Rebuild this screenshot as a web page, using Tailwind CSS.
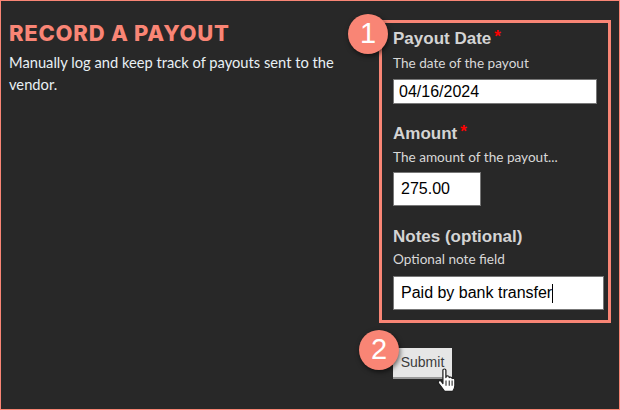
<!DOCTYPE html>
<html lang="en">
  <head>
    <meta charset="UTF-8" />
    <title>Record a payout</title>
    <script src="https://cdn.jsdelivr.net/npm/@tailwindcss/browser@4"></script>
  </head>
  <body class="bg-[#282828]">
    <div class="relative flex h-[410px] w-[620px] overflow-hidden border border-[#f98575] bg-[#282828] pl-[8px] pr-[9px] pt-[19px] font-['Lato',sans-serif]">
      <!-- Left intro -->
      <div class="w-[370px] shrink-0">
        <h2 class="font-['Inter',sans-serif] text-[22px] leading-[26px] font-extrabold tracking-[0.75px] text-[#f98575]">RECORD A PAYOUT</h2>
        <p class="mt-[5px] w-[340px] text-[14.7px] leading-[22px] text-[#e8f0f4]">Manually log and keep track of payouts sent to the vendor.</p>
      </div>

      <!-- Form -->
      <div class="flex flex-col">
        <div class="h-[303px] w-[232px] border-[3px] border-[#f98575] pl-[11px] pt-[5px]">
          <div class="flex h-[22px] items-center font-['Liberation_Sans',sans-serif] text-[17px] font-bold text-[#d4d4d4]">Payout Date<span class="ml-[3px] -translate-y-[2px] text-[#f00]">*</span></div>
          <div class="mt-[3px] h-[20px] text-[13.6px] leading-[20px] text-[#d8d8d8]">The date of the payout</div>
          <div class="mt-[6px] flex h-[25px] w-[204px] items-center border border-[#777] bg-white pl-[5px] font-['Liberation_Sans',sans-serif] text-[16px] text-black">04/16/2024</div>

          <div class="mt-[19px] flex h-[22px] items-center font-['Liberation_Sans',sans-serif] text-[17px] font-bold text-[#d4d4d4]">Amount<span class="ml-[3px] -translate-y-[2px] text-[#f00]">*</span></div>
          <div class="mt-[2px] h-[20px] text-[13.6px] leading-[20px] text-[#d8d8d8]">The amount of the payout...</div>
          <div class="mt-[5px] flex h-[34px] w-[88px] items-center border border-[#777] bg-white pl-[7px] font-['Liberation_Sans',sans-serif] text-[16px] text-black">275.00</div>

          <div class="mt-[20px] flex h-[22px] items-center font-['Liberation_Sans',sans-serif] text-[17px] font-bold text-[#d4d4d4]">Notes (optional)</div>
          <div class="mt-[1px] h-[20px] text-[13.6px] leading-[20px] text-[#d8d8d8]">Optional note field</div>
          <div class="mt-[7px] flex h-[34px] w-[211px] items-center border border-[#777] bg-white pl-[7px] font-['Liberation_Sans',sans-serif] text-[16px] text-black">Paid by bank transfer<span class="h-[19px] w-px bg-black"></span></div>
        </div>
        <button class="ml-[14px] mt-[25px] h-[31px] w-[59px] border-b-2 border-[#999] bg-[#e6e6e6] font-['Liberation_Sans',sans-serif] text-[14px] text-[#3c3c3c]">Submit</button>
      </div>

      <!-- Step badges -->
      <div class="absolute left-[347px] top-[13px] flex h-10 w-10 items-center justify-center rounded-full bg-[#f98575] font-['Liberation_Sans',sans-serif] text-[29px] text-white shadow-[1px_2px_5px_rgba(0,0,0,0.6)]">1</div>
      <div class="absolute left-[358px] top-[329px] flex h-10 w-10 items-center justify-center rounded-full bg-[#f98575] font-['Liberation_Sans',sans-serif] text-[29px] text-white shadow-[1px_2px_5px_rgba(0,0,0,0.6)]">2</div>

      <!-- Hand cursor -->
      <svg class="absolute left-[435px] top-[367px]" width="23" height="27" viewBox="0 0 20 26" preserveAspectRatio="none">
        <path d="M6 2.200c0-1.600 2.600-1.600 2.600 0v7l.4-1.400c1.600-.6 2.500.2 2.500 1.400 1.200-.8 2.500-.3 2.500 1 1.200-.6 2.400 0 2.400 1.300v5.500c0 2.500-1 4-1.800 5.500H7.400c-1-2-2.200-3.600-4.700-7-1-1.400-1-2.400-.3-3 .8-.6 1.800-.2 2.600 1L6 15z" fill="#fff" stroke="#222" stroke-width="1.100" stroke-linejoin="round"/>
        <path d="M8.700 12v5M11.500 12v5M14 12v5" stroke="#222" stroke-width=".9" fill="none"/>
      </svg>
    </div>
  </body>
</html>
